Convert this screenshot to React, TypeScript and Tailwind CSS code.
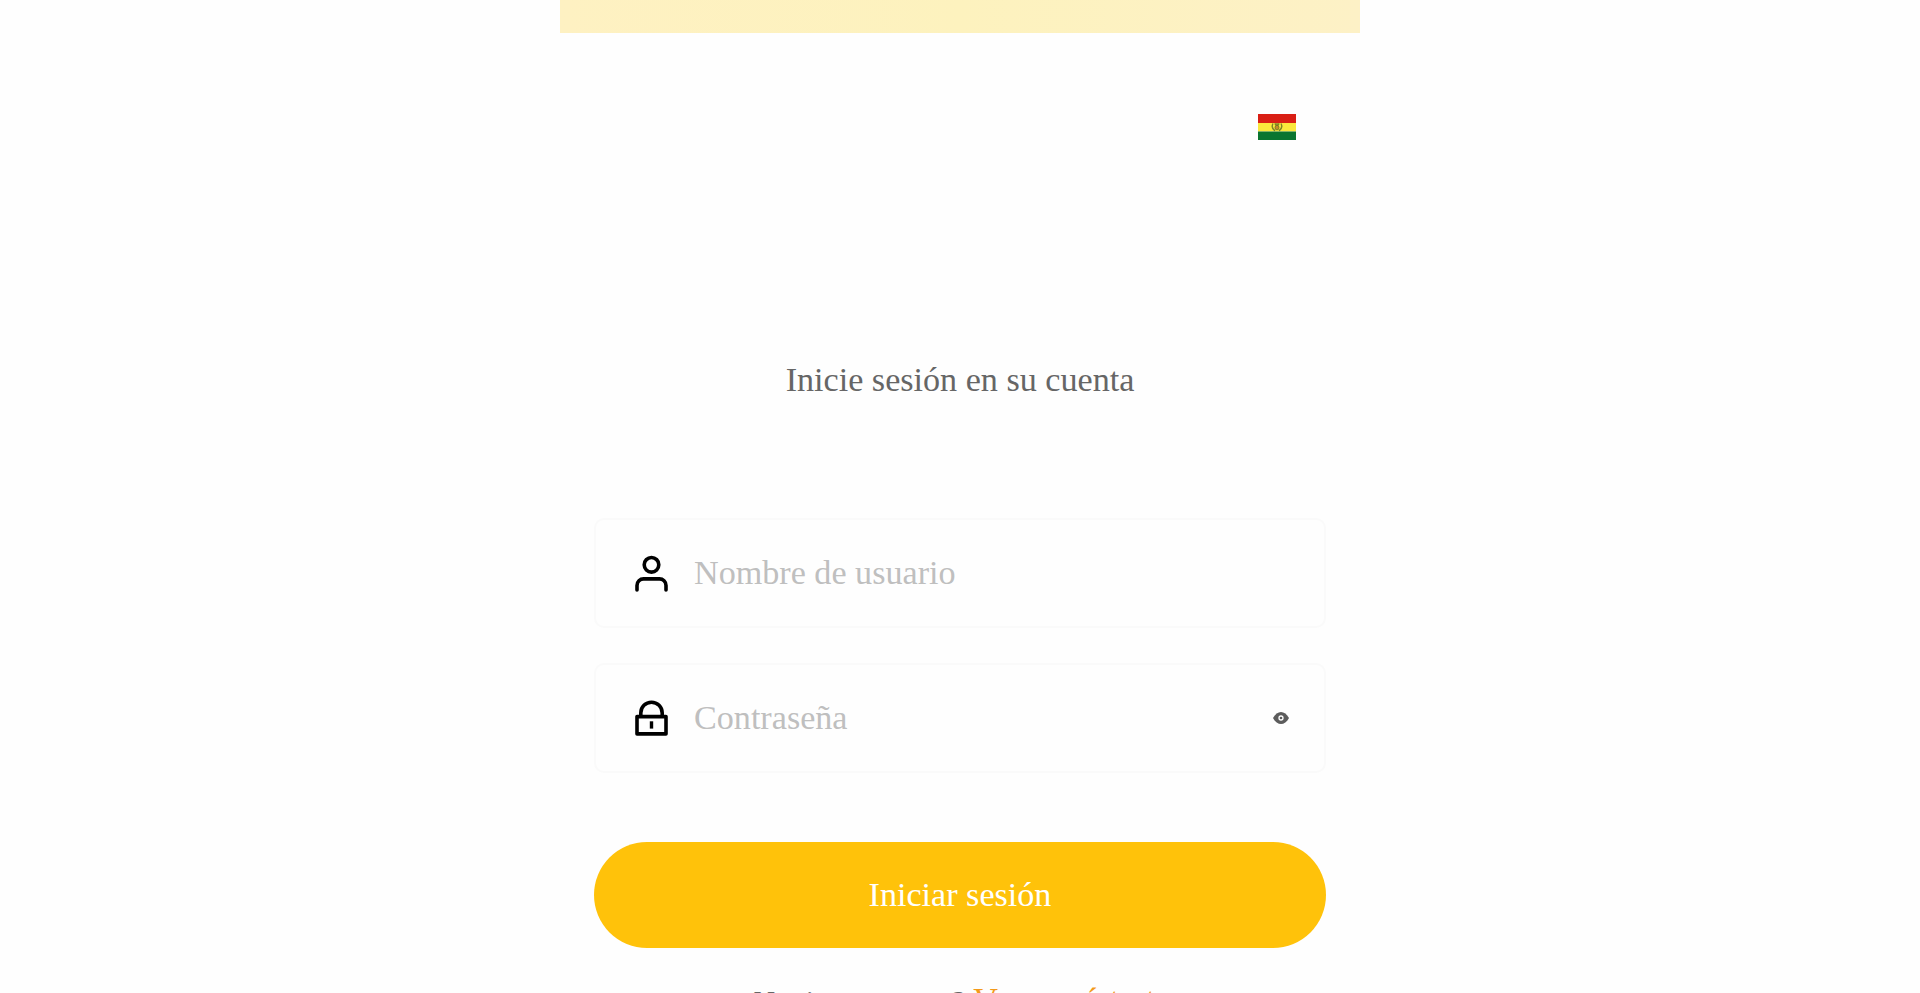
import type { ReactNode } from "react";

function UserIcon() {
    return (
        <svg width="34" height="38" viewBox="0 0 34 38" fill="none" stroke="#000" strokeWidth="3.6" strokeLinecap="round">
            <circle cx="17.5" cy="10.8" r="7.3" />
            <path d="M3 36v-4.5a6.600 6.600 0 0 1 6.600-6.600h15.800a6.600 6.600 0 0 1 6.600 6.600v4.500" />
        </svg>
    );
}

function LockIcon() {
    return (
        <svg width="34" height="38" viewBox="0 0 34 38" fill="none" stroke="#000" strokeWidth="3.6" strokeLinejoin="round">
            <rect x="3" y="17.6" width="29" height="17.3" />
            <path d="M6.800 17.500v-3.600a10.700 10.700 0 0 1 21.400 0v3.600" />
            <path d="M17.500 22.300v7.300" strokeWidth="3.400" />
        </svg>
    );
}

function EyeIcon() {
    return (
        <svg width="16" height="12" viewBox="0 0 16 12">
            <path d="M0 6C2.200 2 5 0 8 0s5.800 2 8 6c-2.200 4-5 6-8 6S2.200 10 0 6Z" fill="#5c5c5c" />
            <circle cx="8" cy="6" r="2" fill="none" stroke="#fff" strokeWidth="1.300" />
        </svg>
    );
}

function BoliviaFlag() {
    return (
        <svg width="38" height="26" viewBox="0 0 38 26">
            <path d="M0 0h38v9H0z" fill="#d91e14" />
            <path d="M0 9h38v8.500H0z" fill="#fbe73c" />
            <path d="M0 17.500h38V26H0z" fill="#0a7530" />
            <g fill="none" stroke="#7d8528" strokeWidth="1.400">
                <path d="M15 9.500c-1.600 3-.6 5.500 2 7.300M23 9.500c1.600 3 .6 5.500-2 7.300" />
                <path d="M17 9.300l.8 2.200M21 9.300l-.8 2.200M19 9v2.500" />
            </g>
            <ellipse cx="19" cy="13.600" rx="2" ry="2.300" fill="#c58a2c" stroke="#6b7420" strokeWidth=".8" />
        </svg>
    );
}

type FieldProps = {
    icon: ReactNode;
    type: string;
    placeholder: string;
    trailing?: ReactNode;
};

function Field({ icon, type, placeholder, trailing }: FieldProps) {
    return (
        <label className="flex h-[110px] items-center rounded-[10px] border-2 border-[#fafafa] bg-[#fefefe] pr-[35px] pl-[38px]">
            {icon}
            <input
                type={type}
                placeholder={placeholder}
                className="mb-px ml-[26px] h-12 min-w-0 flex-1 bg-transparent text-[34.13px] outline-none placeholder:text-[#bfbfbf]"
            />
            {trailing}
        </label>
    );
}

export default function App() {
    return (
        <main className="h-[993px] overflow-hidden bg-[#fefefe] font-['Liberation_Serif',serif]">
            <div className="mx-auto w-[800px]">
                <div className="h-[33px] bg-linear-to-r from-[#fef1c2] via-[#fdf2be] to-[#fdf1c6]" />

                <div className="flex justify-end pt-[81px] pr-16">
                    <BoliviaFlag />
                </div>

                <h1 className="mt-[214px] text-center text-[34.13px] leading-[52px] text-[#666]">
                    Inicie sesión en su cuenta
                </h1>

                <form className="mt-[112px] px-[34px]">
                    <Field icon={<UserIcon />} type="text" placeholder="Nombre de usuario" />
                    <div className="mt-[35px]">
                        <Field icon={<LockIcon />} type="password" placeholder="Contraseña" trailing={<EyeIcon />} />
                    </div>
                    <button
                        type="button"
                        className="mt-[69px] h-[106px] w-full rounded-full bg-[#ffc20a] text-[34.13px] leading-[52px] text-white"
                    >
                        Iniciar sesión
                    </button>
                </form>

                <p className="mt-[27px] pl-1 text-center text-[29.87px] leading-[50px] whitespace-nowrap text-[#666]">
                    No tienes cuenta? <a className="text-[34.13px] text-[#f39a1b]">Ve y regístrate</a>
                </p>
            </div>
        </main>
    );
}
